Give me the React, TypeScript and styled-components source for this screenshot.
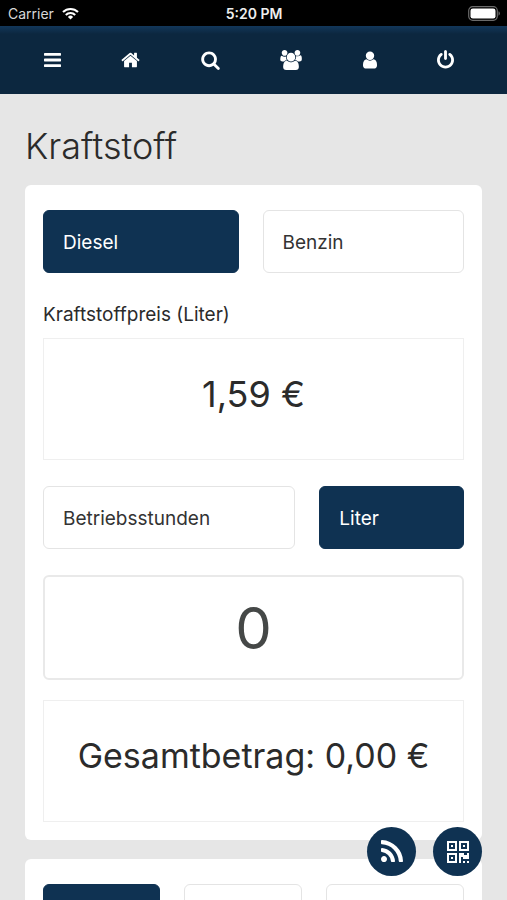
import React, { useState } from "react";
import styled, { createGlobalStyle } from "styled-components";

const navy = "#0f3252";

const GlobalStyle = createGlobalStyle`
  *, *::before, *::after { box-sizing: border-box; }
  body {
    margin: 0;
    background: #e6e6e6;
    color: #2b2b2b;
    font-family: Inter, "Liberation Sans", sans-serif;
    font-size: 19px;
  }
  button, input { font: inherit; color: inherit; }
`;

const Shell = styled.div`
  position: relative;
  display: flex;
  flex-direction: column;
  height: 100vh;
`;

const StatusBar = styled.header`
  display: grid;
  grid-template-columns: 1fr auto 1fr;
  align-items: center;
  flex: none;
  height: 26px;
  padding: 0 7px 0 8px;
  background: #000;
  color: #d8d8d8;
  font-size: 14px;
`;

const Carrier = styled.span`
  display: flex;
  align-items: center;
  gap: 8px;
`;

const Clock = styled.time`
  color: #eee;
  font-weight: 600;
`;

const BatteryIcon = styled.svg`
  justify-self: end;
`;

const NavBar = styled.nav`
  display: flex;
  align-items: center;
  justify-content: space-between;
  flex: none;
  height: 68px;
  padding: 0 53px 0 44px;
  background: linear-gradient(#12375a, #0c273f 8px);
`;

const NavButton = styled.button`
  display: flex;
  padding: 0;
  border: 0;
  background: none;
  color: #fff;
  cursor: pointer;
`;

const Content = styled.main`
  flex: 1;
  min-height: 0;
  overflow-y: auto;
  scrollbar-width: none;
  padding: 28px 25px 0;
`;

const Title = styled.h1`
  margin: 0 0 15px;
  font-size: 36px;
  font-weight: 300;
  line-height: 48px;
`;

const Card = styled.section`
  margin-bottom: 19px;
  padding: 25px 18px 18px;
  border-radius: 6px;
  background: #fff;
`;

const ChoiceRow = styled.div`
  display: flex;
  gap: 24px;
  margin-bottom: 26px;
`;

const Choice = styled.button<{ $active?: boolean; $grow?: number }>`
  flex: ${(p) => (p.$grow ? `${p.$grow} 1 0` : "1 1 auto")};
  height: 63px;
  padding: ${(p) => (p.$grow ? "0" : "2px 19px 0")};
  border: 1px solid ${(p) => (p.$active ? navy : "#e4e4e4")};
  border-radius: 6px;
  background: ${(p) => (p.$active ? navy : "#fff")};
  color: ${(p) => (p.$active ? "#fff" : "#333")};
  text-align: left;
  cursor: pointer;
`;

const FieldLabel = styled.h2`
  margin: 0 0 8px;
  padding-top: 1px;
  font-size: 19px;
  font-weight: 400;
  line-height: 30px;
`;

const Amount = styled.output`
  display: block;
  height: 122px;
  margin-bottom: 26px;
  padding: 31px 0;
  border: 1px solid #efefef;
  font-size: 36px;
  line-height: 48px;
  text-align: center;
  white-space: nowrap;
`;

const Total = styled(Amount)`
  margin-bottom: 0;
  font-size: 34px;
`;

const Quantity = styled.input`
  display: block;
  width: 100%;
  height: 105px;
  margin-bottom: 20px;
  padding: 0;
  border: 2px solid #e9e9e9;
  border-radius: 6px;
  background: #fff;
  color: #454847;
  font-size: 58px;
  text-align: center;
`;

const FloatingActions = styled.div`
  position: absolute;
  right: 25px;
  bottom: 24px;
  display: flex;
  gap: 17px;
`;

const RoundButton = styled.button`
  display: grid;
  place-items: center;
  width: 49px;
  height: 49px;
  padding: 0;
  border: 0;
  border-radius: 50%;
  background: ${navy};
  color: #fff;
  cursor: pointer;
`;

const navItems = [
  {
    label: "Menü",
    width: 17,
    box: "128 0 1536 1792",
    path: "M1664 1344v128q0 26-19 45t-45 19h-1408q-26 0-45-19t-19-45v-128q0-26 19-45t45-19h1408q26 0 45 19t19 45zm0-512v128q0 26-19 45t-45 19h-1408q-26 0-45-19t-19-45v-128q0-26 19-45t45-19h1408q26 0 45 19t19 45zm0-512v128q0 26-19 45t-45 19h-1408q-26 0-45-19t-19-45v-128q0-26 19-45t45-19h1408q26 0 45 19t19 45z",
  },
  {
    label: "Startseite",
    width: 19,
    box: "64 0 1664 1792",
    path: "M1472 992v480q0 26-19 45t-45 19h-384v-384h-256v384h-384q-26 0-45-19t-19-45v-480q0-1 .5-3t.5-3l575-474 575 474q1 2 1 6zm223-69l-62 74q-8 9-21 11h-3q-13 0-21-7l-692-577-692 577q-12 8-24 7-13-2-21-11l-62-74q-8-10-7-23.5t11-21.5l719-599q32-26 76-26t76 26l244 204v-195q0-14 9-23t23-9h192q14 0 23 9t9 23v408l219 182q10 8 11 21.5t-7 23.5z",
  },
  {
    label: "Suche",
    width: 19,
    box: "64 0 1664 1792",
    path: "M1216 832q0-185-131.5-316.5t-316.5-131.5-316.5 131.5-131.5 316.5 131.5 316.5 316.5 131.5 316.5-131.5 131.5-316.5zm512 832q0 52-38 90t-90 38q-54 0-90-38l-343-342q-179 124-399 124-143 0-273.5-55.5t-225-150-150-225-55.5-273.5 55.5-273.5 150-225 225-150 273.5-55.5 273.5 55.5 225 150 150 225 55.5 273.5q0 220-124 399l343 343q37 37 37 90z",
  },
  {
    label: "Gruppe",
    width: 22,
    box: "0 0 1920 1792",
    path: "M593 896q-162 5-265 128h-134q-82 0-138-40.5t-56-118.5q0-353 124-353 6 0 43.5 21t97.5 42.5 119 21.5q67 0 133-23-5 37-5 66 0 159 93 293zm1071 637q0 120-73 189.5t-194 69.5h-874q-121 0-194-69.5t-73-189.5q0-53 3.5-103.5t14-109 26.5-108.5 43-97.5 62-81 85.5-53.5 111.5-20q10 0 43 21.5t73 48 107 48 135 21.5 135-21.5 107-48 73-48 43-21.5q61 0 111.5 20t85.5 53.5 62 81 43 97.5 26.5 108.5 14 109 3.5 103.5zm-1024-1277q0 106-75 181t-181 75-181-75-75-181 75-181 181-75 181 75 75 181zm704 384q0 159-112.5 271.5t-271.5 112.5-271.5-112.5-112.5-271.5 112.5-271.5 271.5-112.5 271.5 112.5 112.5 271.5zm576 225q0 78-56 118.5t-138 40.5h-134q-103-123-265-128 93-134 93-293 0-29-5-66 66 23 133 23 59 0 119-21.5t97.5-42.5 43.5-21q124 0 124 353zm-128-609q0 106-75 181t-181 75-181-75-75-181 75-181 181-75 181 75 75 181z",
  },
  {
    label: "Profil",
    width: 14,
    box: "256 0 1280 1792",
    path: "M1536 1399q0 109-62.5 187t-150.5 78h-854q-88 0-150.5-78t-62.5-187q0-85 8.5-160.5t31.5-152 58.5-131 94-89 134.5-34.5q131 128 313 128t313-128q76 0 134.5 34.5t94 89 58.5 131 31.5 152 8.5 160.5zm-256-887q0 159-112.5 271.5t-271.5 112.5-271.5-112.5-112.5-271.5 112.5-271.5 271.5-112.5 271.5 112.5 112.5 271.5z",
  },
  {
    label: "Abmelden",
    width: 17,
    box: "128 0 1536 1792",
    path: "M1664 896q0 156-61 298t-164 245-245 164-298 61-298-61-245-164-164-245-61-298q0-182 80.5-343t226.5-270q43-32 95.5-25t83.5 50q32 42 24.5 94.5t-49.5 84.5q-98 74-151.5 181t-53.5 228q0 104 40.5 198.5t109.5 163.5 163.5 109.5 198.5 40.5 198.5-40.5 163.5-109.5 109.5-163.5 40.5-198.5q0-121-53.5-228t-151.5-181q-42-32-49.5-84.5t24.5-94.5q31-43 84-50t95 25q146 109 226.5 270t80.5 343zm-640-768v640q0 52-38 90t-90 38-90-38-38-90v-640q0-52 38-90t90-38 90 38 38 90z",
  },
];

const extraOptions = [
  { label: "Option 1", grow: 117 },
  { label: "Option 2", grow: 117 },
  { label: "Option 3", grow: 138 },
];

function WifiIcon() {
  return (
    <svg width="17" height="13" viewBox="0 0 17 13" fill="none" stroke="#fff" strokeWidth="2.1" aria-hidden="true">
      <path d="M1 5a10.7 10.7 0 0 1 15 0" />
      <path d="M3.8 8a6.7 6.7 0 0 1 9.4 0" />
      <path d="M8.5 12.5 5.9 9.9a3.7 3.7 0 0 1 5.2 0z" fill="#fff" stroke="none" />
    </svg>
  );
}

function Battery() {
  return (
    <BatteryIcon width="32" height="15" viewBox="0 0 32 15" aria-hidden="true">
      <rect x="0.7" y="0.7" width="28.6" height="13.6" rx="4" fill="none" stroke="#6b6b6b" strokeWidth="1.2" />
      <rect x="2.5" y="2.5" width="25" height="10" rx="2.3" fill="#fff" />
      <path d="M30.5 5.3q1.4.6 1.4 2.2t-1.4 2.2z" fill="#6b6b6b" />
    </BatteryIcon>
  );
}

function RssIcon() {
  return (
    <svg width="28" height="28" viewBox="0 0 1792 1792" fill="currentColor" aria-hidden="true">
      <path d="M576 1344q0 80-56 136t-136 56-136-56-56-136 56-136 136-56 136 56 56 136zm512 123q2 28-17 48-18 21-47 21h-135q-25 0-43-16.5t-20-41.5q-22-229-184.5-391.5t-391.5-184.5q-25-2-41.5-20t-16.5-43v-135q0-29 21-47 17-17 43-17h5q160 13 306 80.5t259 181.5q114 113 181.5 259t80.5 306zm512 2q2 27-18 47-18 20-46 20h-143q-26 0-44.5-17.5t-19.5-42.5q-12-215-101-408.5t-231.5-336-336-231.5-408.5-102q-25-1-42.5-19.5t-17.5-43.5v-143q0-28 20-46 18-18 44-18h3q262 13 501.5 120t425.5 294q187 186 294 425.5t120 501.5z" />
    </svg>
  );
}

function QrIcon() {
  return (
    <svg width="22" height="22" viewBox="0 0 22 22" fill="currentColor" aria-hidden="true">
      <path fillRule="evenodd" d="M0 0h10v10H0zM2 2v6h6V2zM12 0h10v10H12zM14 2v6h6V2zM0 12h10v10H0zM2 14v6h6v-6z" />
      <path d="M4 4h2v2H4zM16 4h2v2h-2zM4 16h2v2H4zM12 12h5v2h3v-2h2v6h-6v-2h-2v6h-2zM16 20h2v2h-2zM20 20h2v2h-2z" />
    </svg>
  );
}

export default function App() {
  const [fuel, setFuel] = useState("Diesel");
  const [unit, setUnit] = useState("Liter");
  const [option, setOption] = useState("Option 1");
  const [quantity, setQuantity] = useState("0");

  const total = ((Number(quantity.replace(",", ".")) || 0) * 1.59).toFixed(2).replace(".", ",");

  return (
    <Shell>
      <GlobalStyle />
      <StatusBar>
        <Carrier>
          Carrier
          <WifiIcon />
        </Carrier>
        <Clock>5:20 PM</Clock>
        <Battery />
      </StatusBar>
      <NavBar>
        {navItems.map((item) => (
          <NavButton key={item.label} type="button" aria-label={item.label}>
            <svg width={item.width} height="20" viewBox={item.box} fill="currentColor" aria-hidden="true">
              <path d={item.path} />
            </svg>
          </NavButton>
        ))}
      </NavBar>
      <Content>
        <Title>Kraftstoff</Title>
        <Card>
          <ChoiceRow>
            {["Diesel", "Benzin"].map((name) => (
              <Choice key={name} type="button" $active={fuel === name} aria-pressed={fuel === name} onClick={() => setFuel(name)}>
                {name}
              </Choice>
            ))}
          </ChoiceRow>
          <FieldLabel id="price-label">Kraftstoffpreis (Liter)</FieldLabel>
          <Amount aria-labelledby="price-label">1,59 €</Amount>
          <ChoiceRow>
            {["Betriebsstunden", "Liter"].map((name) => (
              <Choice key={name} type="button" $active={unit === name} aria-pressed={unit === name} onClick={() => setUnit(name)}>
                {name}
              </Choice>
            ))}
          </ChoiceRow>
          <Quantity
            aria-label={unit}
            inputMode="decimal"
            value={quantity}
            onChange={(event) => setQuantity(event.target.value)}
          />
          <Total>Gesamtbetrag: {total} €</Total>
        </Card>
        <Card>
          <ChoiceRow>
            {extraOptions.map(({ label, grow }) => (
              <Choice
                key={label}
                type="button"
                aria-label={label}
                aria-pressed={option === label}
                $active={option === label}
                $grow={grow}
                onClick={() => setOption(label)}
              />
            ))}
          </ChoiceRow>
        </Card>
      </Content>
      <FloatingActions>
        <RoundButton type="button" aria-label="Neuigkeiten">
          <RssIcon />
        </RoundButton>
        <RoundButton type="button" aria-label="QR-Code scannen">
          <QrIcon />
        </RoundButton>
      </FloatingActions>
    </Shell>
  );
}
